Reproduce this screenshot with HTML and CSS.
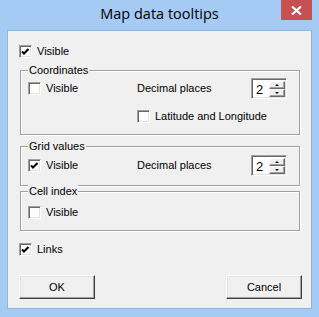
FILE: index.html
```html
<!DOCTYPE html>
<html>
<head>
<meta charset="utf-8">
<link rel="stylesheet" href="styles.css">
</head>
<body>
<div class="window">
  <div class="titlebar">
    <span></span>
    <span class="title">Map data tooltips</span>
    <span class="close"><svg width="11" height="9" viewBox="0 0 11 9"><path d="M1 0.5 L10 8.5 M10 0.5 L1 8.5" stroke="#fff" stroke-width="2.2"/></svg></span>
  </div>
  <div class="client">
    <label class="chk top-visible"><span class="box"><svg class="tick" width="9" height="9" viewBox="0 0 9 9"><path d="M1 3.5 L3 5.5 L7.5 1" fill="none" stroke="#000" stroke-width="2.1"/></svg></span><span>Visible</span></label>

    <div class="group g-coords">
      <div class="legend">Coordinates</div>
      <div class="row">
        <label class="chk col-a"><span class="box"></span><span>Visible</span></label>
        <span class="col-b">Decimal places</span>
        <div class="spin"><span class="spin-val">2</span><span class="spin-btns"><span class="sbtn"><i class="up"></i></span><span class="sbtn"><i class="down"></i></span></span></div>
      </div>
      <label class="chk latlon"><span class="box"></span><span>Latitude and Longitude</span></label>
    </div>

    <div class="group g-grid">
      <div class="legend">Grid values</div>
      <div class="row">
        <label class="chk col-a"><span class="box"><svg class="tick" width="9" height="9" viewBox="0 0 9 9"><path d="M1 3.5 L3 5.5 L7.5 1" fill="none" stroke="#000" stroke-width="2.1"/></svg></span><span>Visible</span></label>
        <span class="col-b">Decimal places</span>
        <div class="spin"><span class="spin-val">2</span><span class="spin-btns"><span class="sbtn"><i class="up"></i></span><span class="sbtn"><i class="down"></i></span></span></div>
      </div>
    </div>

    <div class="group g-cell">
      <div class="legend">Cell index</div>
      <label class="chk"><span class="box"></span><span>Visible</span></label>
    </div>

    <label class="chk links"><span class="box"><svg class="tick" width="9" height="9" viewBox="0 0 9 9"><path d="M1 3.5 L3 5.5 L7.5 1" fill="none" stroke="#000" stroke-width="2.1"/></svg></span><span>Links</span></label>

    <div class="buttons">
      <button class="btn">OK</button>
      <button class="btn">Cancel</button>
    </div>
  </div>
</div>
</body>
</html>
```
FILE: styles.css
```css
* { box-sizing: border-box; }
html, body { margin: 0; padding: 0; }
body { width: 319px; height: 317px; overflow: hidden; }

.window {
  width: 319px;
  height: 317px;
  background: #a5caf3;
  font-family: "Liberation Sans", Arial, sans-serif;
  font-size: 11px;
  color: #000;
}

.titlebar {
  height: 30px;
  display: grid;
  grid-template-columns: 1fr auto 1fr;
  align-items: start;
}
.title {
  font-family: "Open Sans", "Noto Sans", sans-serif;
  font-size: 14.5px;
  line-height: 30px;
  margin-top: -1px;
  color: #000;
}
.close {
  justify-self: end;
  margin-right: 7px;
  width: 31px;
  height: 20px;
  background: #c75050;
  display: flex;
  align-items: center;
  justify-content: center;
}

.client {
  margin-left: 7px;
  width: 305px;
  height: 279px;
  background: #f0f0f0;
  border: 1px solid #8fb4de;
  padding-top: 14px;
  display: flex;
  flex-direction: column;
  align-items: flex-start;
}

.chk {
  display: flex;
  align-items: center;
  gap: 5px;
  height: 13px;
  line-height: 13px;
  white-space: nowrap;
}
.box {
  width: 13px;
  height: 13px;
  flex: none;
  background: #fff;
  border-top: 1px solid #a0a0a0;
  border-left: 1px solid #a0a0a0;
  border-right: 1px solid #fff;
  border-bottom: 1px solid #fff;
  box-shadow: inset 1px 1px 0 #696969, inset -1px -1px 0 #e3e3e3;
  display: flex;
  align-items: center;
  justify-content: center;
}
.tick { display: block; margin-top: 1px; }

.top-visible { margin-left: 11px; }

.group {
  margin-left: 12px;
  width: 280px;
  border: 1px solid #a0a0a0;
  box-shadow: inset 1px 1px 0 #fff, 1px 1px 0 #fff;
  padding-left: 7px;
}
.legend {
  width: fit-content;
  margin-top: -7px;
  margin-bottom: -6px;
  padding: 0 1px;
  height: 13px;
  line-height: 13px;
  background: #f0f0f0;
}

.g-coords { margin-top: 12px; height: 65px; }
.g-coords .row { margin-top: 7px; }
.g-grid { margin-top: 11px; height: 40px; }
.g-grid .row { margin-top: 8px; }
.g-cell { margin-top: 5px; height: 40px; }
.g-cell .chk { margin-top: 14px; }

.row {
  display: flex;
  align-items: center;
  height: 21px;
}
.col-a { width: 109px; gap: 5px; }
.col-b { width: 114px; line-height: 13px; }

.latlon { margin-top: 11px; margin-left: 109px; }

.spin {
  width: 36px;
  height: 21px;
  display: flex;
  background: #fff;
  border-top: 1px solid #a0a0a0;
  border-left: 1px solid #a0a0a0;
  border-right: 1px solid #fff;
  border-bottom: 1px solid #fff;
  box-shadow: inset 1px 1px 0 #696969, inset -1px -1px 0 #e3e3e3;
  padding: 2px 1px 1px 2px;
}
.spin-val {
  flex: 1;
  font-size: 13px;
  line-height: 17px;
  padding-left: 2px;
}
.spin-btns {
  width: 16px;
  display: flex;
  flex-direction: column;
}
.sbtn {
  flex: 1;
  background: #f0f0f0;
  border-top: 1px solid #fff;
  border-left: 1px solid #fff;
  border-right: 1px solid #696969;
  border-bottom: 1px solid #696969;
  box-shadow: inset -1px -1px 0 #a0a0a0;
  display: flex;
  align-items: center;
  justify-content: center;
}
.sbtn i { display: block; width: 0; height: 0; }
.sbtn .up { border-left: 2px solid transparent; border-right: 2px solid transparent; border-bottom: 2px solid #000; }
.sbtn .down { border-left: 2px solid transparent; border-right: 2px solid transparent; border-top: 2px solid #000; }

.links { margin-top: 12px; margin-left: 11px; }

.buttons {
  margin-top: 19px;
  width: 100%;
  display: flex;
  justify-content: space-between;
  padding: 0 9px 0 11px;
}
.btn {
  width: 76px;
  height: 24px;
  font-family: "Liberation Sans", Arial, sans-serif;
  font-size: 11px;
  color: #000;
  background: #f0f0f0;
  border-top: 1px solid #fff;
  border-left: 1px solid #fff;
  border-right: 1px solid #404040;
  border-bottom: 1px solid #404040;
  box-shadow: inset -1px -1px 0 #a0a0a0, inset 1px 1px 0 #e3e3e3;
  padding: 0;
  margin: 0;
  border-radius: 0;
}
```
